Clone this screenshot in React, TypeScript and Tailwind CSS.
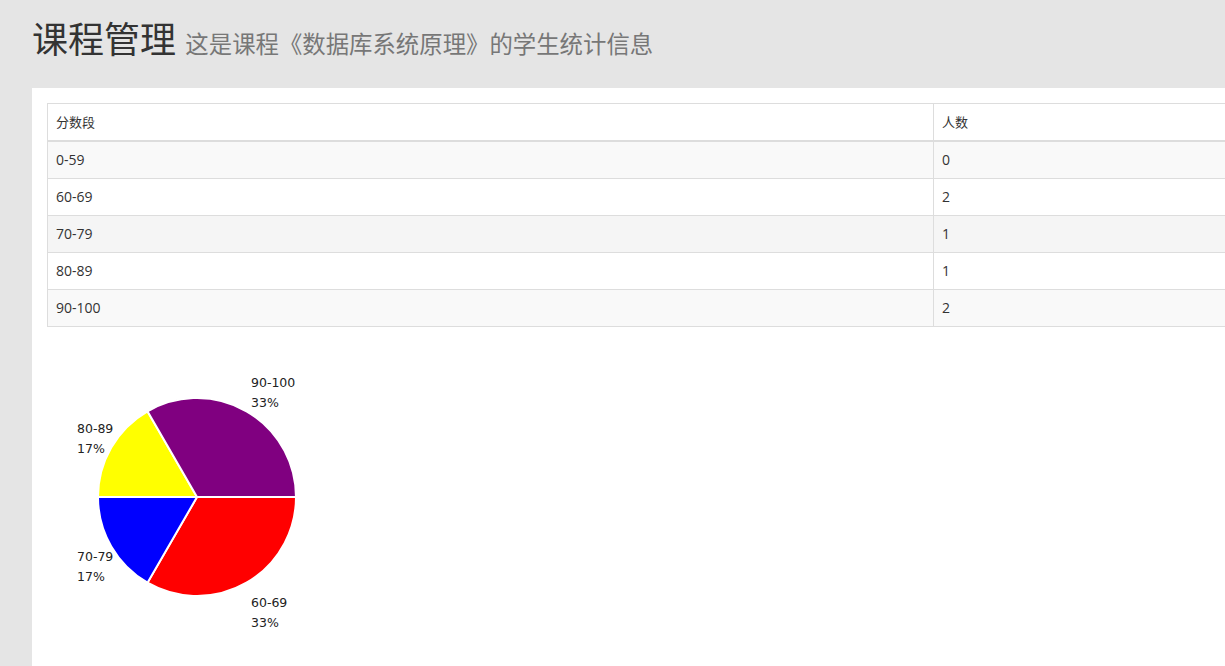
import React from 'react';

const rows = [
  { range: '0-59', count: 0 },
  { range: '60-69', count: 2 },
  { range: '70-79', count: 1 },
  { range: '80-89', count: 1 },
  { range: '90-100', count: 2 },
];

const rowBg = ['bg-[#f9f9f9]', 'bg-white', 'bg-[#f5f5f5]', 'bg-white', 'bg-[#f9f9f9]'];

// pie slices, angles in degrees (0 = 3 o'clock, clockwise)
const slices = [
  { from: 0, to: 120, color: '#ff0000' },
  { from: 120, to: 180, color: '#0000ff' },
  { from: 180, to: 240, color: '#ffff00' },
  { from: 240, to: 360, color: '#800080' },
];

const labels = [
  { x: 204, y: 40, name: '90-100', pct: '33%' },
  { x: 30, y: 86, name: '80-89', pct: '17%' },
  { x: 30, y: 214, name: '70-79', pct: '17%' },
  { x: 204, y: 260, name: '60-69', pct: '33%' },
];

function slicePath(from: number, to: number, cx: number, cy: number, r: number) {
  const a = (from * Math.PI) / 180;
  const b = (to * Math.PI) / 180;
  const x1 = cx + r * Math.cos(a);
  const y1 = cy + r * Math.sin(a);
  const x2 = cx + r * Math.cos(b);
  const y2 = cy + r * Math.sin(b);
  const large = to - from > 180 ? 1 : 0;
  return `M${cx},${cy} L${x1},${y1} A${r},${r} 0 ${large} 1 ${x2},${y2} Z`;
}

function PieChart() {
  return (
    <svg width="300" height="300" className="block mt-[20px]">
      {slices.map((s) => (
        <path key={s.from} d={slicePath(s.from, s.to, 150, 150, 99)} fill={s.color} stroke="#fff" strokeWidth="2" />
      ))}
      {labels.map((l) => (
        <text key={l.name} x={l.x} y={l.y} fontSize="12.5" fill="#222" fontFamily="'DejaVu Sans', sans-serif">
          <tspan x={l.x}>{l.name}</tspan>
          <tspan x={l.x} dy="20">{l.pct}</tspan>
        </text>
      ))}
    </svg>
  );
}

export default function App() {
  return (
    <div className="h-[666px] w-[1225px] overflow-hidden bg-[#e5e5e5] font-['Open_Sans','Noto_Sans_CJK_SC',sans-serif] text-[#333]">
      <div className="h-[88px] pl-[32px] pt-[20px]">
        <h1 className="text-[36px] leading-[40px] font-normal text-[#333] whitespace-nowrap">
          课程管理 <span className="text-[23.4px] text-[#777]">这是课程《数据库系统原理》的学生统计信息</span>
        </h1>
      </div>
      <div className="ml-[32px] w-[1240px] h-[600px] bg-white p-[15px]">
        <table className="w-[1210px] border-collapse border border-[#ddd] text-[14px] leading-[20px]">
          <thead>
            <tr className="bg-white">
              <th className="w-[886px] text-left font-normal text-[13px] px-[8px] py-[8px] border border-[#ddd] border-b-2">分数段</th>
              <th className="text-left font-normal text-[13px] px-[8px] py-[8px] border border-[#ddd] border-b-2">人数</th>
            </tr>
          </thead>
          <tbody>
            {rows.map((r, i) => (
              <tr key={r.range} className={rowBg[i]}>
                <td className="px-[8px] py-[8px] border border-[#ddd]">{r.range}</td>
                <td className="px-[8px] py-[8px] border border-[#ddd]">{r.count}</td>
              </tr>
            ))}
          </tbody>
        </table>
        <PieChart />
      </div>
    </div>
  );
}
